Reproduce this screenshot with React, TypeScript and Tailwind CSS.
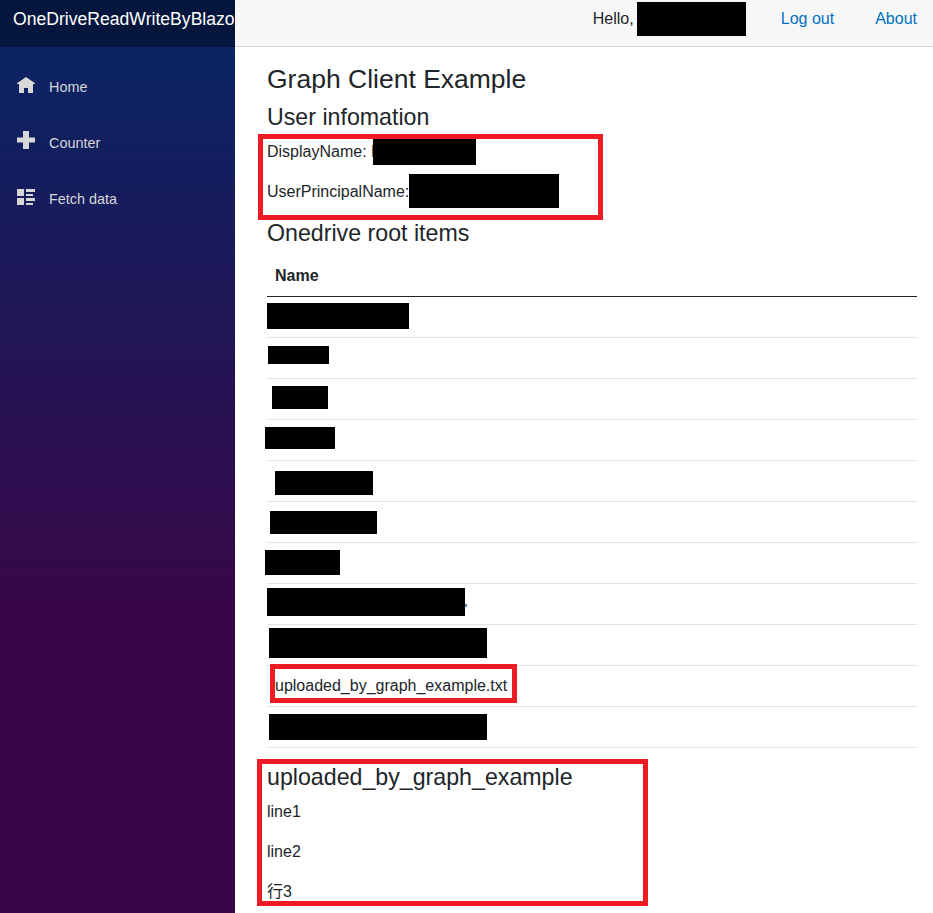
import React from "react";

const navItems = [
  {
    label: "Home",
    icon: <path d="M9 0L0 6.3V7h2v9h5v-5h4v5h5V7h2v-.7L9 0z" />,
    shift: "mb-[3px]",
  },
  {
    label: "Counter",
    icon: <path d="M6 0v6.5H0v5h6V18h6v-6.5h6v-5h-6V0H6z" />,
    shift: "mb-[7px]",
  },
  {
    label: "Fetch data",
    icon: <path d="M0 0v7h7V0H0zM9 0v3h9V0H9zM9 5v2h7V5H9zM0 9v7h7V9H0zM9 9v3h9V9H9zM9 14v2h7v-2H9z" />,
    shift: "mb-[3px]",
  },
];

const rows = [
  "mt-[6px] h-[26px] w-[142px]",
  "mt-[8px] ml-[1px] h-[18px] w-[61px]",
  "mt-[7px] ml-[5px] h-[23px] w-[56px]",
  "mt-[7px] -ml-[2px] h-[22px] w-[70px]",
  "mt-[10px] ml-[8px] h-[24px] w-[98px]",
  "mt-[9px] ml-[3px] h-[23px] w-[107px]",
  "mt-[7px] -ml-[2px] h-[25px] w-[75px]",
  "mt-[4px] h-[28px] w-[198px]",
  "mt-[3px] ml-[2px] h-[30px] w-[218px]",
  "",
  "mt-[7px] ml-[2px] h-[26px] w-[218px]",
];

function Highlight({ className }: { className: string }) {
  return <div className={`pointer-events-none absolute border-[5px] border-[#ed1c24] ${className}`} />;
}

export default function App() {
  return (
    <div className="flex h-[913px] w-[933px] overflow-hidden bg-white font-['Liberation_Sans','Noto_Sans_CJK_JP',sans-serif] text-base text-[#212529]">
      <aside className="w-[235px] shrink-0 overflow-hidden bg-[linear-gradient(180deg,#052767_-9px,#3a0647_630px)] text-[#d7d7d7]">
        <div className="flex h-[47px] items-center overflow-hidden bg-black/40 pb-[9px] pl-[13px] text-[17.6px] whitespace-nowrap text-white">
          OneDriveReadWriteByBlazo
        </div>
        <nav className="flex flex-col gap-2 pt-4">
          {navItems.map((item) => (
            <a key={item.label} className="flex h-12 items-center text-[14.4px]">
              <span className="flex w-[49px] items-center pl-[17px]">
                <svg viewBox="0 0 18 18" className={`h-[18px] w-[18px] fill-current ${item.shift}`}>
                  {item.icon}
                </svg>
              </span>
              <span className="pt-[2px]">{item.label}</span>
            </a>
          ))}
        </nav>
      </aside>

      <main className="relative flex min-w-0 flex-1 flex-col">
        <header className="flex h-[47px] shrink-0 items-start justify-end border-b border-[#d6d5d5] bg-[#f7f7f7] pr-4 leading-6">
          <span className="mt-[7px] w-11">Hello,</span>
          <span className="mt-[2px] h-[34px] w-[109px] bg-black" />
          <a className="mt-[7px] ml-[35px] text-[#0071c1]">Log out</a>
          <a className="mt-[7px] ml-[41px] text-[#0071c1]">About</a>
        </header>

        <section className="pt-[17px] pr-4 pl-8">
          <h3 className="mb-2 h-8 text-[26.5px] leading-[31px]">Graph Client Example</h3>
          <h4 className="mb-2 h-7 text-[23.2px] leading-[26px]">User infomation</h4>
          <div className="flex h-10 items-start leading-6">
            <span className="w-[115px] whitespace-nowrap">DisplayName: K</span>
            <span className="relative -mt-[1px] -ml-[9px] h-[26px] w-[103px] bg-black" />
          </div>
          <div className="flex h-10 items-start leading-6">
            <span className="w-[142px] whitespace-nowrap">UserPrincipalName:</span>
            <span className="-mt-[6px] h-[34px] w-[150px] bg-black" />
          </div>
          <h4 className="mb-2 h-7 text-[23.2px] leading-[26px]">Onedrive root items</h4>

          <div className="mb-4">
            <div className="h-[41px] border-b border-[#212529] p-2 leading-6 font-bold">Name</div>
            {rows.map((block, i) => (
              <div key={i} className="flex h-[41px] items-start border-b border-[#dee2e6]">
                {block ? <span className={`bg-black ${block}`} /> : <span className="p-2 leading-6">uploaded_by_graph_example.txt</span>}
                {i === 7 && <span className="mt-[20px] h-[3px] w-[2px] -skew-x-12 bg-[#4a84b5]" />}
              </div>
            ))}
          </div>

          <h4 className="mb-2 h-7 text-[23.2px] leading-[26px]">uploaded_by_graph_example</h4>
          <p className="mb-4 leading-6">line1</p>
          <p className="mb-4 leading-6">line2</p>
          <p className="leading-6">行3</p>
        </section>

        <Highlight className="top-[134px] left-[23px] h-[86px] w-[345px]" />
        <Highlight className="top-[664px] left-[35px] h-[39px] w-[247px]" />
        <Highlight className="top-[759px] left-[22px] h-[147px] w-[391px]" />
      </main>
    </div>
  );
}
